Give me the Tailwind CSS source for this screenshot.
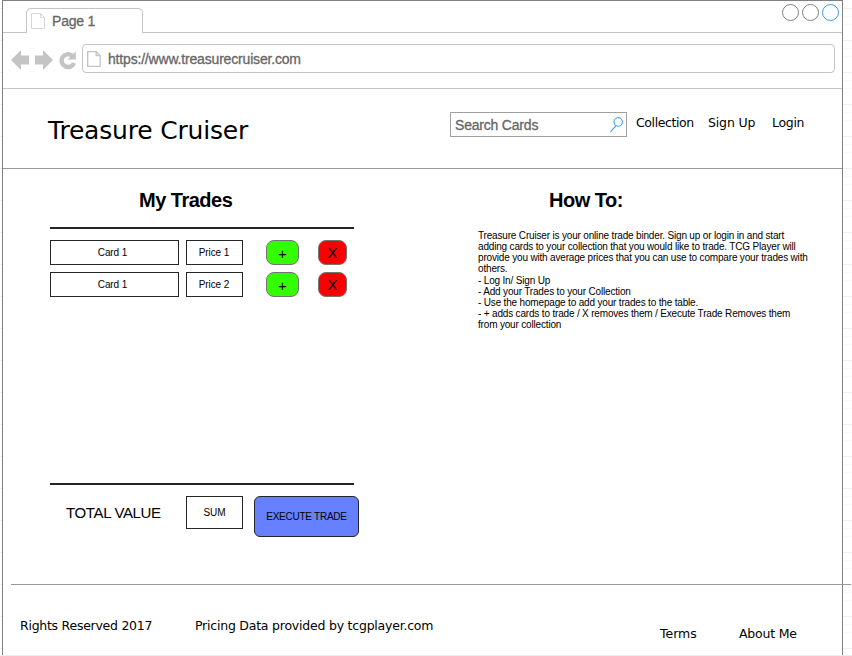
<!DOCTYPE html>
<html lang="en">
<head>
<meta charset="utf-8">
<title>Treasure Cruiser</title>
<script src="https://cdn.jsdelivr.net/npm/@tailwindcss/browser@4"></script>
</head>
<body class="w-[852px] h-[656px] overflow-hidden bg-white text-black font-['Liberation_Sans',Arial,sans-serif]">
<div class="w-[852px] h-[656px] pl-[2px] border-b border-[#ececec] bg-[repeating-linear-gradient(to_bottom,transparent_0_8px,#f0f0f0_8px_9px,transparent_9px_16px,#fafafa_16px_17px,transparent_17px_24px,#fafafa_24px_25px,transparent_25px_32px)]">
  <div class="w-[841px] h-[655px] flex flex-col bg-white border border-b-0 border-[#808080]">

    <div class="h-[32px] shrink-0 flex justify-between border-b border-[#c4c4c4]">
      <div class="ml-[23px] mt-[7px] w-[117px] h-[25px] pl-[4px] flex items-start rounded-t-[5px] border border-b-0 border-[#c4c4c4] bg-white">
        <svg class="mt-[4px]" width="14" height="16" viewBox="0 0 14 16" fill="none" stroke="#d6d6d6"><path d="M.5.5h9l4 4v11H.5zM9.500.5v4h4"/></svg>
        <span class="ml-[7px] mt-[3px] text-[14px] leading-[18px] tracking-[-0.2px] text-[#666] whitespace-nowrap [-webkit-text-stroke:0.3px_#666]">Page 1</span>
      </div>
      <div class="mt-[3px] mr-[3px] flex gap-[3px]">
        <div class="size-[17px] rounded-full border border-[#808080]"></div>
        <div class="size-[17px] rounded-full border border-[#808080]"></div>
        <div class="size-[17px] rounded-full border border-[#3399ff]"></div>
      </div>
    </div>

    <div class="h-[56px] shrink-0 flex items-start border-b border-[#c4c4c4]">
      <svg class="ml-[8px] mt-[17px]" width="18" height="20" viewBox="0 0 18 20" fill="#c4c4c4"><path d="M0 10 10 0V5.500h8v9h-8V20z"/></svg>
      <svg class="ml-[6px] mt-[17px]" width="18" height="20" viewBox="0 0 18 20" fill="#c4c4c4"><path d="M18 10 8 0V5.500H0v9h8V20z"/></svg>
      <svg class="ml-[6px] mt-[17px]" width="18" height="20" viewBox="0 0 18 20"><path d="M13 5.600A6.400 6.400 0 1 0 15 13" fill="none" stroke="#c4c4c4" stroke-width="4.400"/><path d="M16.800 1.300V9.500H8.800z" fill="#c4c4c4"/></svg>
      <div class="ml-[5px] mt-[11px] w-[753px] h-[29px] pl-[4px] flex rounded-[4px] border border-[#c4c4c4]">
        <svg class="mt-[6px]" width="14" height="16" viewBox="0 0 14 16" fill="none" stroke="#c4c4c4" stroke-width="1.300"><path d="M.7.700h8.500l4 4v10.600H.7zM9.200.7v4h4"/></svg>
        <span class="ml-[7px] mt-[5px] text-[14px] leading-[18px] tracking-[-0.18px] text-[#666] whitespace-nowrap [-webkit-text-stroke:0.3px_#666]">https://www.treasurecruiser.com</span>
      </div>
    </div>

    <header class="h-[80px] shrink-0 flex items-start border-b border-[#999] font-['DejaVu_Sans',Verdana,sans-serif]">
      <h1 class="ml-[45px] mt-[27px] w-[402px] text-[25px] leading-[30px] tracking-[-0.2px] whitespace-nowrap">Treasure Cruiser</h1>
      <div class="mt-[23px] w-[177px] h-[25px] pl-[4px] pr-[3px] flex items-center justify-between border border-[#a0a0a0] font-['Liberation_Sans',Arial,sans-serif]">
        <span class="text-[14px] leading-[18px] tracking-[-0.2px] text-[#666] whitespace-nowrap [-webkit-text-stroke:0.3px_#666]">Search Cards</span>
        <svg width="13" height="16" viewBox="0 0 13 16" fill="none" stroke="#3399ff" stroke-width="1.100"><circle cx="8.200" cy="5" r="4.200"/><path d="M6 8.600.5 15"/></svg>
      </div>
      <nav class="mt-[26px] ml-[9px] flex text-[12.500px] leading-[16px] whitespace-nowrap">
        <a class="w-[72px] tracking-[-0.4px]">Collection</a><a class="w-[64px] tracking-[-0.15px]">Sign Up</a><a class="tracking-[-0.3px]">Login</a>
      </nav>
    </header>

    <main class="h-[415px] shrink-0 flex">
      <section class="ml-[47px] w-[310px] flex flex-col items-start">
        <h2 class="mt-[19px] ml-[89px] text-[20px] leading-[24px] tracking-[-0.5px] font-bold whitespace-nowrap">My Trades</h2>
        <div class="mt-[15px] w-[304px] h-[2px] bg-[#262626]"></div>
        <div class="mt-[11px] h-[243px] flex flex-col gap-[7px] text-[10px]">
          <div class="flex h-[25px] items-stretch text-center leading-[24px]">
            <div class="w-[129px] pr-[4px] border border-[#262626] tracking-[-0.1px]">Card 1</div>
            <div class="ml-[7px] w-[57px] pr-px border border-[#262626] tracking-[-0.1px]">Price 1</div>
            <button class="ml-[23px] w-[33px] rounded-[8px] border border-[#737373] bg-[#33ff00] text-[15px] leading-[25px]">+</button>
            <button class="ml-[19px] w-[29px] rounded-[8px] border border-[#737373] bg-[#ff0000] text-[15px] leading-[23px] pb-px">X</button>
          </div>
          <div class="flex h-[25px] items-stretch text-center leading-[24px]">
            <div class="w-[129px] pr-[4px] border border-[#262626] tracking-[-0.1px]">Card 1</div>
            <div class="ml-[7px] w-[57px] pr-px border border-[#262626] tracking-[-0.1px]">Price 2</div>
            <button class="ml-[23px] w-[33px] rounded-[8px] border border-[#737373] bg-[#33ff00] text-[15px] leading-[25px]">+</button>
            <button class="ml-[19px] w-[29px] rounded-[8px] border border-[#737373] bg-[#ff0000] text-[15px] leading-[23px] pb-px">X</button>
          </div>
        </div>
        <div class="w-[304px] h-[2px] bg-[#262626]"></div>
        <div class="mt-[11px] flex items-start text-[10px] whitespace-nowrap">
          <div class="ml-[16px] mt-[8px] w-[120px] text-[15px] leading-[18px] tracking-[-0.36px]">TOTAL VALUE</div>
          <div class="w-[57px] h-[33px] text-center leading-[32px] border border-[#262626]">SUM</div>
          <button class="ml-[11px] w-[105px] h-[41px] rounded-[6px] border border-[#262626] bg-[#6680ff] text-[10px] tracking-[-0.25px]">EXECUTE TRADE</button>
        </div>
      </section>
      <section class="ml-[118px]">
        <h2 class="mt-[19px] ml-[71px] text-[20px] leading-[24px] tracking-[-0.5px] font-bold whitespace-nowrap">How To:</h2>
        <p class="mt-[18px] text-[10px] leading-[11.120px] tracking-[-0.175px] whitespace-nowrap">Treasure Cruiser is your online trade binder. Sign up or login in and start<br>adding cards to your collection that you would like to trade. TCG Player will<br>provide you with average prices that you can use to compare your trades with<br>others.<br>- Log In/ Sign Up<br>- Add your Trades to your Collection<br>- Use the homepage to add your trades to the table.<br>- + adds cards to trade / X removes them / Execute Trade Removes them<br>from your collection</p>
      </section>
    </main>

    <footer class="ml-[8px] w-[840px] h-[71px] shrink-0 flex items-start border-t border-[#999] font-['DejaVu_Sans',Verdana,sans-serif] text-[12.500px] leading-[16px] whitespace-nowrap">
      <span class="ml-[9px] mt-[33px] w-[175px] tracking-[-0.26px]">Rights Reserved 2017</span>
      <span class="mt-[33px] w-[465px] tracking-[-0.22px]">Pricing Data provided by tcgplayer.com</span>
      <a class="mt-[41px] w-[79px]">Terms</a>
      <a class="mt-[41px] tracking-[-0.2px]">About Me</a>
    </footer>
  </div>
</div>
</body>
</html>
